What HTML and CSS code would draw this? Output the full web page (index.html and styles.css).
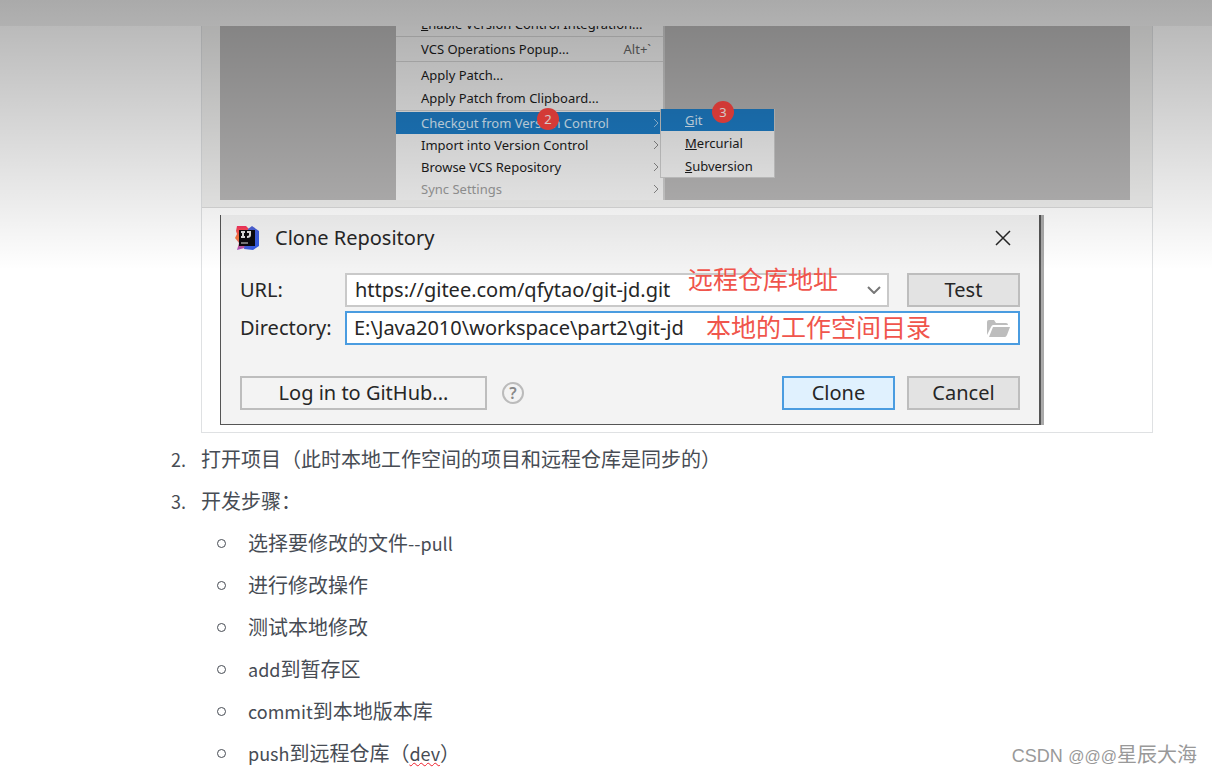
FILE: index.html
```html
<!DOCTYPE html>
<html lang="zh-CN">
<head>
<meta charset="utf-8">
<meta name="viewport" content="width=device-width, initial-scale=1">
<title>Git</title>
<link rel="stylesheet" href="styles.css">
</head>
<body>
<header class="topbar"></header>
<main class="article">
  <section class="frame">
    <div class="cell cell-shade">
      <div class="shot">
        <div class="menu">
          <button class="item item-tall"><span><u>E</u>nable Version Control Integration...</span></button>
          <hr class="sep">
          <button class="item"><span>VCS Operations Popup...</span><span class="key">Alt+`</span></button>
          <hr class="sep">
          <button class="item item-tall"><span>Apply Patch...</span></button>
          <button class="item item-tall"><span>Apply Patch from Clipboard...</span></button>
          <hr class="sep">
          <div class="group">
            <button class="item active"><span>Check<u>o</u>ut from Version Control</span><svg class="arrow" viewBox="0 0 6 10"><path d="M1 1l4 4-4 4"/></svg></button>
            <span class="badge badge-two">2</span>
            <div class="submenu">
              <button class="item active"><span><u>G</u>it</span></button>
              <button class="item"><span><u>M</u>ercurial</span></button>
              <button class="item"><span><u>S</u>ubversion</span></button>
              <span class="badge badge-three">3</span>
            </div>
          </div>
          <button class="item"><span>Import into Version Control</span><svg class="arrow" viewBox="0 0 6 10"><path d="M1 1l4 4-4 4"/></svg></button>
          <button class="item"><span>Browse VCS Repository</span><svg class="arrow" viewBox="0 0 6 10"><path d="M1 1l4 4-4 4"/></svg></button>
          <button class="item muted"><span>Sync Settings</span><svg class="arrow" viewBox="0 0 6 10"><path d="M1 1l4 4-4 4"/></svg></button>
        </div>
      </div>
    </div>
    <div class="cell cell-dialog">
      <form class="dialog" onsubmit="return false">
        <div class="title-row">
          <svg class="logo" viewBox="0 0 26 26">
            <defs><linearGradient id="warm" x1="0" y1="0" x2="0" y2="1"><stop offset="0" stop-color="#f2305f"/><stop offset=".5" stop-color="#f87a3c"/><stop offset="1" stop-color="#a94bc8"/></linearGradient><linearGradient id="cool" x1="0" y1="0" x2="1" y2="1"><stop offset="0" stop-color="#5a62c8"/><stop offset="1" stop-color="#2d5bea"/></linearGradient></defs>
            <path d="M3 1l9 0 5 5-3 16-11 3 2-7-4-5 2-4-1-3z" fill="url(#warm)"/>
            <path d="M14 4l4-3 7 5 0 15-6 4-9-1z" fill="url(#cool)"/>
            <path d="M5 5h16v16H5z" fill="#0b0a0e"/>
            <path d="M7 7h4M9 7v5M7 12h4M13 7h4M16 7v3q0 2-3 2" fill="none" stroke="#ddd" stroke-width="2"/>
            <path d="M7 18h7" stroke="#777" stroke-width="2"/>
          </svg>
          <h2>Clone Repository</h2>
          <button class="close" aria-label="Close"><svg viewBox="0 0 16 16"><path d="M1 1l14 14M15 1L1 15"/></svg></button>
        </div>
        <div class="fields">
          <label for="url">URL:</label>
          <div class="field">
            <input id="url" type="text" value="https://gitee.com/qfytao/git-jd.git">
            <svg class="caret" viewBox="0 0 14 8"><path d="M1 1l6 6 6-6"/></svg>
            <span class="note note-url">远程仓库地址</span>
          </div>
          <button class="btn">Test</button>
          <label for="dir">Directory:</label>
          <div class="field field-wide">
            <input id="dir" class="focused" type="text" value="E:\Java2010\workspace\part2\git-jd">
            <svg class="folder" viewBox="0 0 23 17"><path d="M0 15V2q0-2 2-2h5l2 3h10q2 0 2 2H6q-1 0-2 2z"/><path d="M6 7h17l-3 8q-1 2-2 2H2z"/></svg>
            <span class="note note-dir">本地的工作空间目录</span>
          </div>
        </div>
        <div class="actions">
          <button class="btn btn-login">Log in to GitHub...</button>
          <button class="help">?</button>
          <button class="btn btn-primary">Clone</button>
          <button class="btn">Cancel</button>
        </div>
      </form>
    </div>
  </section>
  <ol class="steps">
    <li>打开项目（此时本地工作空间的项目和远程仓库是同步的）</li>
    <li>开发步骤：</li>
  </ol>
  <ul class="tasks">
    <li>选择要修改的文件<span class="latin">--pull</span></li>
    <li>进行修改操作</li>
    <li>测试本地修改</li>
    <li><span class="latin">add</span>到暂存区</li>
    <li><span class="latin">commit</span>到本地版本库</li>
    <li><span class="latin">push</span>到远程仓库（<span class="latin typo">dev</span>）</li>
  </ul>
</main>
<div class="shade"></div>
<p class="watermark"><span class="latin">CSDN</span> <span class="at">@@@</span>星辰大海</p>
</body>
</html>
```
FILE: styles.css
```css
* { box-sizing: border-box; }
body {
  position: relative;
  min-height: 100vh;
  margin: 0;
  overflow-x: hidden;
  background: #fff;
  color: #474c54;
  font-family: "Noto Sans CJK SC", sans-serif;
  font-size: 20px;
}
button, input { margin: 0; font: inherit; color: inherit; }
svg { display: block; fill: none; stroke: currentColor; }

.topbar { height: 26px; background: linear-gradient(#aaa, #b1b1b1); }
.article { padding: 0 59px 0 201px; }
.frame { border: 1px solid #dfe1e3; border-top: 0; }
.cell { padding: 0 22px 7px 18px; }
.cell-shade { background: #efefee; border-bottom: 1px solid #dadada; }
.cell-dialog { display: grid; padding-top: 7px; }

/* IDE menu */
.shot {
  display: flex;
  align-items: flex-end;
  height: 174px;
  padding-left: 176px;
  overflow: hidden;
  background: #b6b5b5;
  font-family: "Noto Sans", "Open Sans", sans-serif;
  font-size: 13px;
  color: #1c1c1c;
}
.menu { width: 269px; background: #f3f3f3; border-right: 2px solid #ccc; }
.item {
  display: flex;
  align-items: center;
  justify-content: space-between;
  width: 100%;
  height: 22px;
  padding: 0 4px 0 25px;
  border: 0;
  background: none;
  line-height: 20px;
  text-align: left;
  white-space: nowrap;
}
.item-tall { height: 23px; }
.item.active { background: #1e7ec8; color: #d8ecfc; }
.item.muted { color: #999; }
.key { padding-right: 8px; color: #666; }
.sep { height: 3px; margin: 0; border: solid #f3f3f3; border-width: 1px 0; background: #d2d2d2; }
.arrow { width: 6px; height: 10px; color: #888; }
.active .arrow { color: #9cc8ea; }
.group { position: relative; }
.submenu {
  position: absolute;
  top: -3px;
  left: 264px;
  z-index: 1;
  width: 115px;
  border: 1px solid #ccc;
  border-top: 0;
  background: #f3f3f3;
}
.submenu .item { padding-left: 24px; }
.submenu .item + .item { height: 23px; }
.badge {
  position: absolute;
  width: 22px;
  height: 22px;
  border-radius: 50%;
  background: #ff4642;
  color: #fff0ee;
  line-height: 22px;
  text-align: center;
}
.badge-two { top: -4px; left: 141px; }
.badge-three { top: -8px; left: 51px; }

/* Clone dialog */
.dialog {
  width: calc(100% - 3px);
  max-width: 821px;
  padding: 6px 19px 14px;
  border: 1px solid #555;
  border-top: 0;
  border-right: 2px solid #555;
  box-shadow: 3px 0 #aaa;
  background: #f3f3f3;
  color: #262626;
  font-family: "Noto Sans", "Open Sans", "Noto Sans CJK SC", sans-serif;
}
.title-row { display: flex; align-items: center; height: 34px; padding-right: 9px; }
.logo { width: 26px; height: 26px; margin: 0 15px 0 -6px; stroke: none; }
.title-row h2 { flex: 1; margin: 0; font-size: 20px; font-weight: 400; line-height: 28px; }
.close { padding: 0; border: 0; background: none; }
.close svg { width: 16px; height: 16px; stroke-width: 1.5; }
.fields {
  display: grid;
  grid-template-columns: 105px 1fr 113px;
  row-gap: 4px;
  align-items: center;
  margin-top: 18px;
  line-height: 28px;
}
.field { position: relative; margin-right: 18px; }
.field-wide { grid-column: span 2; margin-right: 0; }
.field input {
  display: block;
  width: 100%;
  height: 34px;
  padding: 0 8px 2px;
  border: 2px solid #c9c9c9;
  outline: 0;
  background: #fff;
}
.field .focused { padding: 0 7px 2px; border-color: #4a9ce0; }
.note { position: absolute; color: #f0554c; font-size: 25px; line-height: 30px; white-space: nowrap; }
.note-url { top: -9px; left: 343px; }
.note-dir { top: 1px; left: 361px; }
.caret { position: absolute; top: 13px; right: 8px; width: 14px; height: 8px; color: #777; stroke-width: 2; }
.folder { position: absolute; top: 9px; right: 10px; width: 23px; height: 17px; fill: #bdbdbd; stroke: none; }
.btn {
  width: 113px;
  height: 34px;
  padding: 0;
  border: 2px solid #bdbdbd;
  background: #e3e3e3;
  line-height: 28px;
}
.btn-primary { margin-left: auto; border-color: #4a9ce0; background: #e0f1fe; }
.btn-login { width: 247px; background: #f3f3f3; }
.actions { display: flex; align-items: center; gap: 12px; margin-top: 31px; }
.help {
  width: 22px;
  height: 22px;
  margin-left: 3px;
  padding: 0;
  border: 2px solid #bbb;
  border-radius: 50%;
  background: none;
  color: #888;
  font-size: 16px;
  font-weight: 600;
  line-height: 18px;
}

/* Lists */
.steps, .tasks { margin: 0; padding: 0; list-style: none; line-height: 42px; }
.steps { margin-top: 5px; margin-left: -30px; counter-reset: step 1; }
.steps li, .tasks li { display: flex; }
.steps li { counter-increment: step; }
.steps li::before { content: counter(step) "."; width: 30px; font-size: 18px; }
.tasks { padding-left: 16px; }
.tasks li { align-items: center; }
.tasks li::before {
  content: "";
  width: 9px;
  height: 9px;
  margin-right: 22px;
  border: 1px solid #474c54;
  border-radius: 50%;
  box-sizing: border-box;
}
.latin { font-size: 18px; }
.typo { text-decoration: underline wavy #f0202c 1px; text-underline-offset: 1px; }

/* Fading shadow below the top bar */
.shade {
  position: absolute;
  top: 26px;
  right: 0;
  left: 0;
  z-index: 2;
  height: 244px;
  background: linear-gradient(rgba(0, 0, 0, .27), rgba(0, 0, 0, 0));
  pointer-events: none;
}
.watermark {
  position: absolute;
  right: 15px;
  bottom: 2px;
  margin: 0;
  color: #999;
  font-family: "Liberation Sans", "Noto Sans CJK SC", sans-serif;
  line-height: 30px;
}
.at { font-size: 16px; }
```
